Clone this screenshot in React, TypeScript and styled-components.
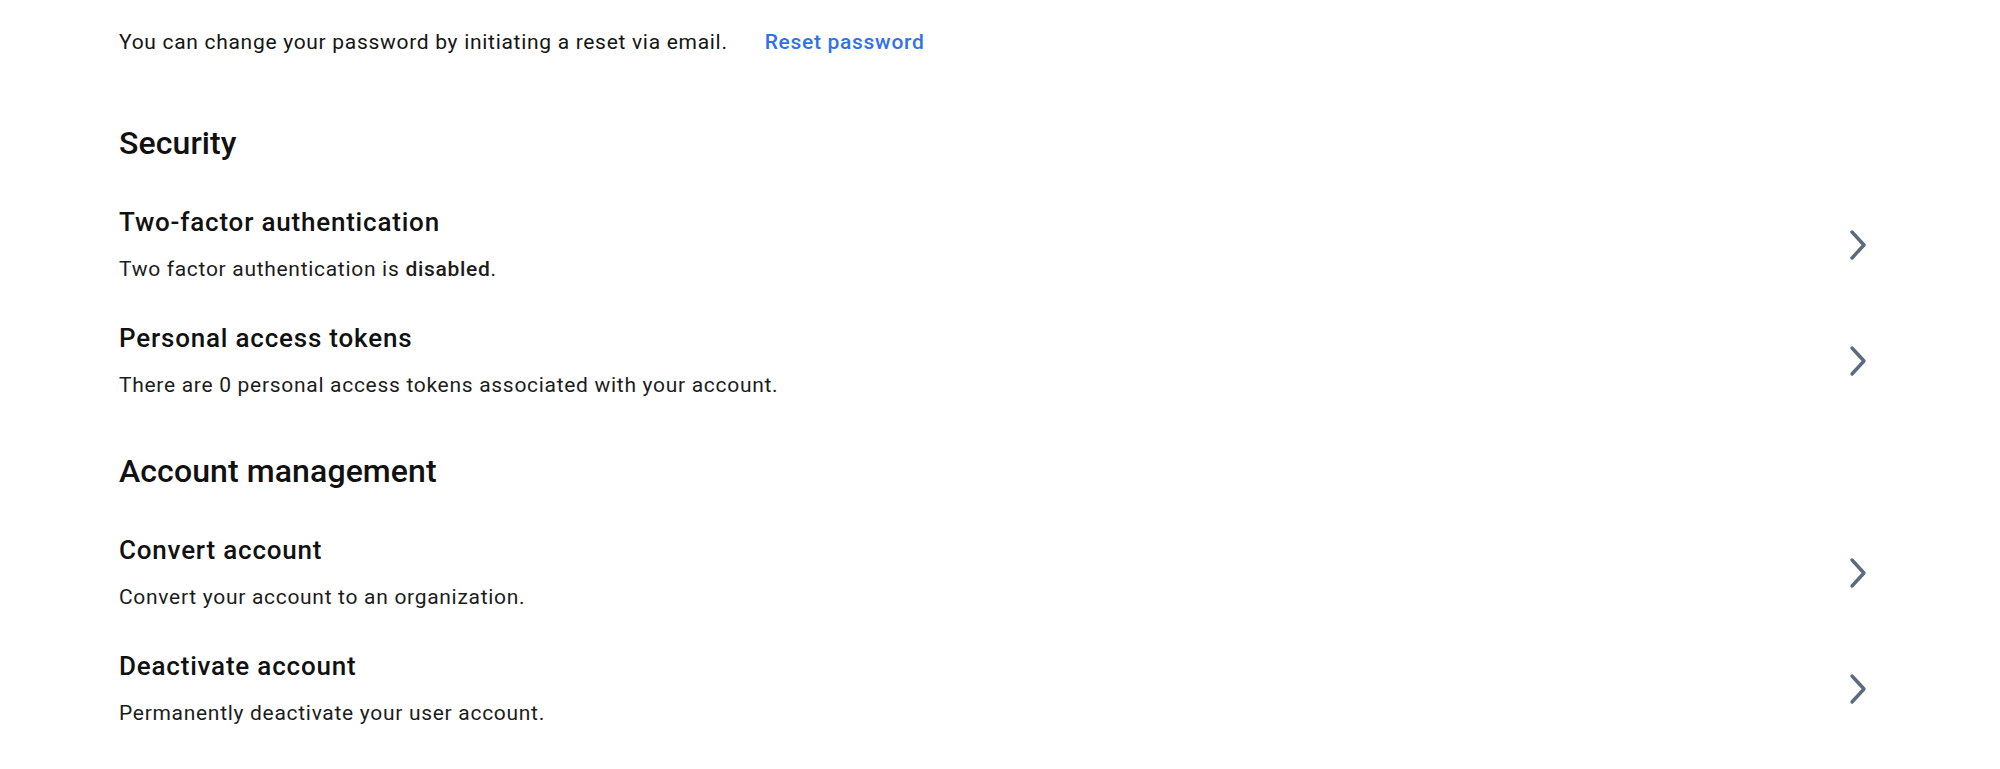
import React from "react";
import styled, {createGlobalStyle} from "styled-components";

const GlobalStyle = createGlobalStyle`
  html, body {
    margin: 0;
    padding: 0;
    background: #ffffff;
  }
  body {
    font-family: Roboto, "Liberation Sans", Arial, sans-serif;
    color: #151515;
    -webkit-font-smoothing: antialiased;
  }
`

const Page = styled.div`
  width: 2000px;
  height: 769px;
  box-sizing: border-box;
  padding: 28px 131px 0 119px;
  background: #ffffff;
  overflow: hidden;
`

const ResetLine = styled.div`
  display: flex;
  align-items: baseline;
  gap: 37px;
  font-size: 21px;
  line-height: 28px;
  letter-spacing: 0.7px;
`

const ResetLink = styled.a`
  color: #2f72ea;
  font-weight: 500;
  text-decoration: none;
  cursor: pointer;
`

const Section = styled.section<{first?: boolean}>`
  margin-top: ${props => props.first ? "69px" : "54px"};
`

const SectionTitle = styled.h2`
  margin: 0;
  font-size: 32px;
  line-height: 36px;
  font-weight: 500;
  letter-spacing: 0.1px;
  color: #111111;
`

const List = styled.div`
  display: flex;
  flex-direction: column;
  gap: 40px;
  margin-top: 46px;
`

const Row = styled.div`
  display: flex;
  align-items: center;
  justify-content: space-between;
  cursor: pointer;
`

const RowText = styled.div`
  display: flex;
  flex-direction: column;
  gap: 18px;
`

const RowTitle = styled.div`
  font-size: 26px;
  line-height: 30px;
  font-weight: 500;
  color: #111111;
  letter-spacing: 0.8px;
`

const RowDesc = styled.div`
  font-size: 21px;
  line-height: 28px;
  color: #1c1c1c;
  letter-spacing: 0.7px;

  b {
    font-weight: 500;
  }
`

const ChevronIcon = styled.svg`
  width: 20px;
  height: 32px;
  flex-shrink: 0;
  margin-right: 1px;
`

const Chevron = () => (
    <ChevronIcon viewBox="0 0 20 32" fill="none">
        <path d="M4 3 L16 16 L4 29" stroke="#5a6a7f" strokeWidth="3.4" strokeLinecap="round" strokeLinejoin="round"/>
    </ChevronIcon>
)

type Item = {
    title: string;
    desc: React.ReactNode;
}

const security: Item[] = [
    {title: "Two-factor authentication", desc: <>Two factor authentication is <b>disabled</b>.</>},
    {title: "Personal access tokens", desc: "There are 0 personal access tokens associated with your account."},
]

const management: Item[] = [
    {title: "Convert account", desc: "Convert your account to an organization."},
    {title: "Deactivate account", desc: "Permanently deactivate your user account."},
]

const SettingsList = ({items}: {items: Item[]}) => (
    <List>
        {items.map(item => (
            <Row key={item.title}>
                <RowText>
                    <RowTitle>{item.title}</RowTitle>
                    <RowDesc>{item.desc}</RowDesc>
                </RowText>
                <Chevron/>
            </Row>
        ))}
    </List>
)

const App: React.FC = () => {
    return (
        <Page>
            <GlobalStyle/>
            <ResetLine>
                <span>You can change your password by initiating a reset via email.</span>
                <ResetLink>Reset password</ResetLink>
            </ResetLine>

            <Section first>
                <SectionTitle>Security</SectionTitle>
                <SettingsList items={security}/>
            </Section>

            <Section>
                <SectionTitle>Account management</SectionTitle>
                <SettingsList items={management}/>
            </Section>
        </Page>
    )
}

export default App;
